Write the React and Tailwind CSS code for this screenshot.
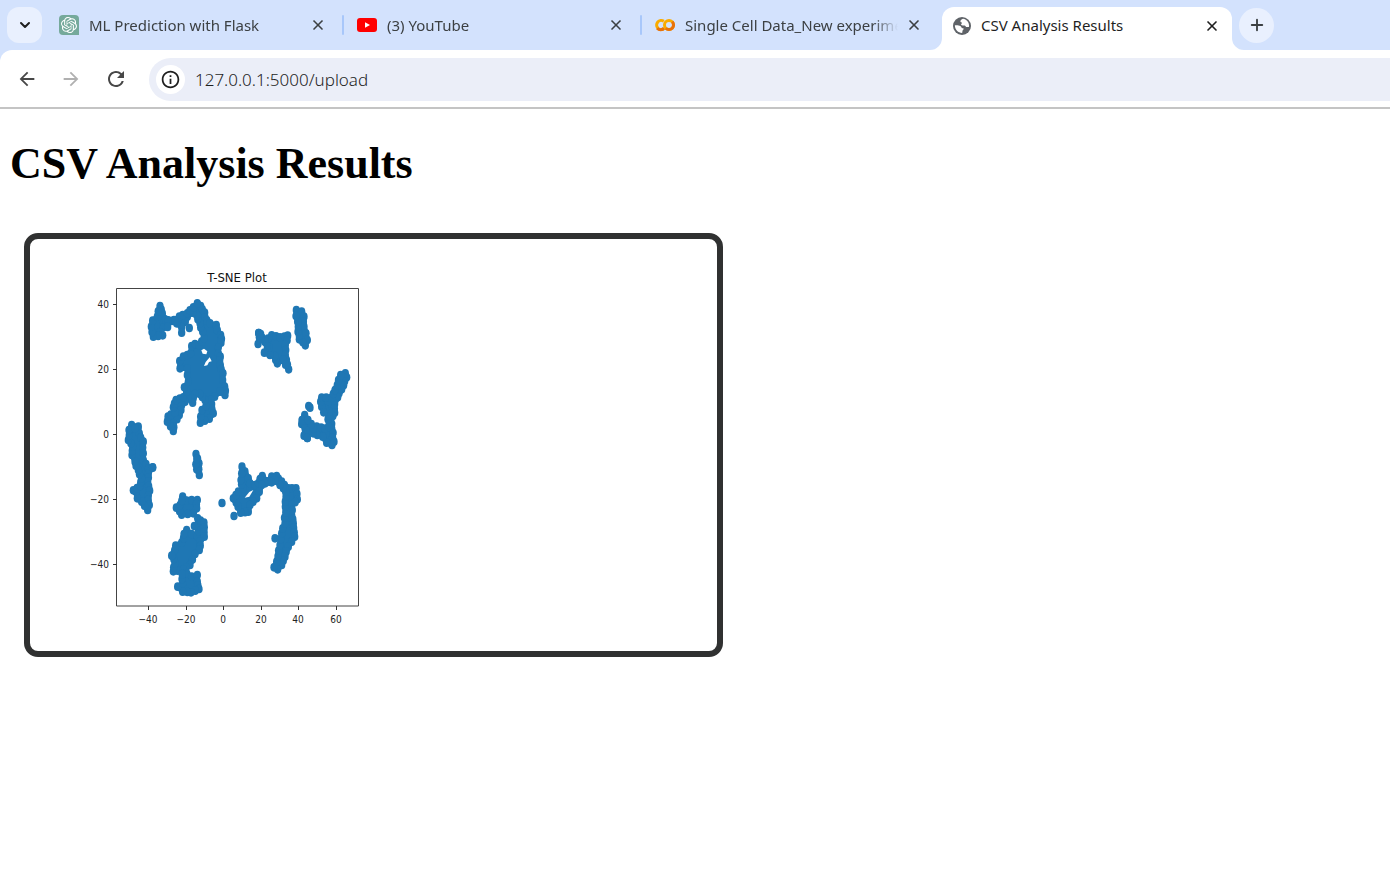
import React from "react";
import { SiOpenai } from "react-icons/si";
import { MdArrowBack, MdArrowForward, MdRefresh, MdInfoOutline } from "react-icons/md";
import { ChevronDown, Plus, X } from "lucide-react";

function ChatIcon() {
  return (
    <span className="flex size-5 shrink-0 items-center justify-center rounded-t rounded-bl bg-[#75a99b] text-white">
      <SiOpenai className="size-4" />
    </span>
  );
}

function YouTubeIcon() {
  return (
    <svg viewBox="0 0 20 20" className="size-5 shrink-0" aria-hidden="true">
      <rect x="0" y="3" width="20" height="14" rx="3" fill="#ff0000" />
      <path d="M8 7.2v5.6l5-2.8z" fill="#fff" />
    </svg>
  );
}

function ColabIcon() {
  return (
    <svg viewBox="0 0 20 20" className="size-5 shrink-0" fill="none" strokeWidth="3" aria-hidden="true">
      <path d="M8.8 6.2A4.6 4.6 0 1 0 8.8 13.8" stroke="#f9ab00" />
      <path d="M2.2 13.2A4.6 4.6 0 0 0 9.2 13" stroke="#e8710a" />
      <circle cx="14" cy="10" r="4.5" stroke="#f9ab00" />
      <path d="M10.8 13.2A4.5 4.5 0 0 0 17.2 6.8" stroke="#e8710a" />
    </svg>
  );
}

function GlobeIcon() {
  return (
    <svg viewBox="0 0 18 18" className="mx-px size-[18px] shrink-0" aria-hidden="true">
      <circle cx="9" cy="9" r="9" fill="#5f6368" />
      <path d="M10 1.800c-1.600.7-2.800 1.700-2.600 2.600.2.800 1.500.6 1.500 1.500 0 .7-.8.8-.8 1.500 0 .9 1.300 1 2.600 1 1.500 0 2.200.7 2.300 1.700h2.900c0-.4.2-.8.2-1.300C16 5 13.500 2.200 10 1.800z" fill="#fff" />
      <path d="M1.900 8.300c2.400-.2 4.300.1 5.400.8 1 .7.8 1.500 1.700 1.900.8.300 1.600.1 1.700.8.100.8-1 1.200-1.200 2-.2.700.1 1.400-.4 2.200C5.300 16 1.700 12.700 1.900 8.300z" fill="#fff" />
    </svg>
  );
}

function Tab({ icon, title, active }) {
  return (
    <div
      className={
        active
          ? "relative ml-1 flex h-[43px] w-[290px] shrink-0 items-center self-end rounded-t-xl bg-white pr-3 pb-[6px] pl-[10px] text-[#1f1f1f]"
          : "flex h-full min-w-0 flex-1 items-center pr-[16px] pl-[13px] text-[#3c4043]"
      }
    >
      {active && (
        <>
          <svg viewBox="0 0 12 12" className="absolute bottom-0 -left-3 size-3" aria-hidden="true">
            <path d="M12 0v12H0A12 12 0 0 0 12 0z" fill="#fff" />
          </svg>
          <svg viewBox="0 0 12 12" className="absolute -right-3 bottom-0 size-3" aria-hidden="true">
            <path d="M0 0v12h12A12 12 0 0 1 0 0z" fill="#fff" />
          </svg>
        </>
      )}
      {icon}
      <a
        href="#"
        className={
          active
            ? "ml-[9px] min-w-0 flex-1 whitespace-nowrap"
            : "ml-[10px] min-w-0 flex-1 whitespace-nowrap [mask-image:linear-gradient(to_right,#000_88%,transparent)]"
        }
      >
        {title}
      </a>
      <button type="button" aria-label={"Close " + title} className="ml-2 flex size-4 items-center justify-center">
        <X className="size-4 shrink-0" strokeWidth={2.5} />
      </button>
    </div>
  );
}

const Divider = () => <span className="h-5 w-[2px] shrink-0 rounded bg-[#a8c7fa]" />;

function BrowserChrome() {
  return (
    <header className="font-['Noto_Sans',sans-serif]">
      <div className="flex h-[50px] items-center bg-[#d3e2fd] pl-[7px] text-[15px]">
        <button type="button" aria-label="Search tabs" className="mr-1 flex h-9 w-[35px] shrink-0 items-center justify-center rounded-xl bg-[#e9f0fe] text-[#1f1f1f]">
          <ChevronDown className="size-4" strokeWidth={3} />
        </button>
        <div className="flex h-full w-[892px] items-center">
          <Tab icon={<ChatIcon />} title="ML Prediction with Flask" />
          <Divider />
          <Tab icon={<YouTubeIcon />} title="(3) YouTube" />
          <Divider />
          <Tab icon={<ColabIcon />} title="Single Cell Data_New experime" />
        </div>
        <Tab active icon={<GlobeIcon />} title="CSV Analysis Results" />
        <button type="button" aria-label="New tab" className="ml-[7px] flex size-[35px] shrink-0 items-center justify-center rounded-full bg-[#e9f0fe] text-[#3c4043]">
          <Plus className="size-[18px]" strokeWidth={2.500} />
        </button>
      </div>
      <div className="bg-[#d3e2fd]">
        <div className="flex h-[59px] items-center rounded-tl-xl border-b-2 border-[#c4c4c4] bg-white pl-4 text-[#474747]">
          <button type="button" aria-label="Back" className="flex size-[22px] items-center justify-center">
            <MdArrowBack className="size-[22px]" />
          </button>
          <button type="button" aria-label="Forward" className="ml-[22px] flex size-[22px] items-center justify-center text-[#b0b0b0]">
            <MdArrowForward className="size-[22px]" />
          </button>
          <button type="button" aria-label="Reload" className="ml-[22px] flex size-6 items-center justify-center">
            <MdRefresh className="size-6" />
          </button>
          <div className="mb-[6px] ml-[21px] flex h-[43px] flex-1 items-center self-end rounded-l-full bg-[#ebeef8] pl-[7px]">
            <span className="flex size-[29px] items-center justify-center rounded-full bg-white text-[#1f1f1f]">
              <MdInfoOutline className="size-[21px]" />
            </span>
            <input aria-label="Address" defaultValue="127.0.0.1:5000/upload" className="ml-[10px] min-w-0 flex-1 bg-transparent text-[17px] font-light text-[#1f1f1f] outline-none" />
          </div>
        </div>
      </div>
    </header>
  );
}

// Cluster outlines and single samples, in thirds of a plot pixel.
const CLUSTERS = [
  "240 138 247 160 255 178 250 202 240 218 248 226 220 230 216 216 214 200 218 182 232 170",
  "352 132 362 138 374 158 375 172 390 190 409 195 412 210 422 225 423 248 415 262 415 280 421 290 421 315 429 340 428 360 434 380 435 405 420 395 404 410 392 420 395 432 400 460 388 476 361 488 362 470 366 450 378 438 375 420 360 402 345 402 338 428 325 415 305 435 298 465 280 490 280 513 262 485 264 470 285 458 280 442 288 420 310 412 320 395 313 382 325 365 322 345 322 325 300 325 299 303 310 290 332 280 335 258 345 252 358 255 372 235 368 215 360 190 350 165 338 158 322 170 316 185 305 202 290 190 282 180 298 170 322 160 340 142",
  "534 252 538 232 536 219 542 222 555 245 575 226 600 232 623 227 616 255 616 285 626 328 610 300 592 310 585 288 570 285 553 278 568 262 555 245 542 236",
  "649 150 665 155 672 170 672 200 678 220 682 240 676 256 658 238 654 215 653 185 648 168",
  "796 340 800 352 785 388 773 412 764 432 764 458 752 478 755 505 762 545 756 555 740 548 728 530 700 520 690 500 710 500 735 506 746 500 744 478 748 455 725 440 722 425 725 413 755 413 765 390 782 345",
  "674 465 666 480 665 492 675 505 672 527 682 534 685 512 700 505 684 480",
  "155 495 175 500 178 520 190 545 190 580 190 600 205 625 218 623 205 640 203 665 209 692 205 706 208 735 203 750 185 725 172 715 168 695 160 691 180 678 185 655 175 630 165 605 156 585 158 560 145 540 147 510",
  "348 582 357 610 358 645 350 628",
  "308 710 320 722 335 720 352 720 350 745 340 760 305 764 289 743 300 735",
  "320 810 335 822 352 828 362 800 353 775 372 788 373 830 360 845 358 870 345 882 330 915 310 930 280 934 285 910 279 885 287 857 305 848 312 822",
  "310 928 320 940 335 950 352 945 352 965 357 987 333 997 308 995 293 980 308 970 306 957",
  "486 620 495 635 505 655 510 670 525 675 535 670 540 657 547 648 560 664 568 664 575 650 590 648 605 665 625 685 648 685 652 718 635 735 635 765 640 790 644 830 635 845 625 860 615 890 605 915 593 928 582 922 590 905 600 855 605 820 615 790 616 740 618 710 617 695 600 675 585 662 575 667 568 665 545 675 538 695 530 715 510 735 505 755 482 758 474 740 460 715 475 695 490 685 483 660 485 640",
].map((list) => {
  const n = list.split(" ").map(Number);
  return n.filter((_, i) => i % 2 === 0).map((x, i) => [x, n[i * 2 + 1]]);
});

const SAMPLES = [
  [257, 180], [275, 183], [265, 181], [286, 183], [305, 218], [328, 204], [536, 219], [539, 226], [562, 260],
  [686, 438], [690, 443], [731, 457], [682, 534], [426, 729], [343, 798], [462, 768], [585, 835],
  [352, 130], [218, 622], [263, 201], [165, 505], [275, 887],
];

// Samples lie along each outline, so that its edge is scalloped.
function edgeSamples(points) {
  return points.flatMap(([x, y], i) => {
    const [u, v] = points[(i + 1) % points.length];
    const steps = Math.max(1, Math.round(Math.hypot(u - x, v - y) / 15));
    return Array.from({ length: steps }, (_, k) => {
      const t = k / steps;
      const drift = k ? Math.sin(i * 7 + k * 3) * 2 : 0;
      return [x + (u - x) * t + drift, y + (v - y) * t];
    });
  });
}

const X_TICKS = [[-40, 68], [-20, 106], [0, 143], [20, 181], [40, 218], [60, 256]];
const Y_TICKS = [[40, 44], [20, 109], [0, 174], [-20, 239], [-40, 304]];

const label = (n) => String(n).replace("-", "\u2212");

function ScatterPlot() {
  return (
    <svg
      viewBox="0 0 290 380"
      className="h-[380px] w-[290px] font-['DejaVu_Sans_Condensed','DejaVu_Sans',sans-serif] text-[10px]"
      role="img"
      aria-label="T-SNE Plot"
    >
      <text x="157" y="22" textAnchor="middle" fill="#111" className="text-[13px]">
        T-SNE Plot
      </text>
      <g transform="scale(.33333)" fill="#1f77b4">
        {CLUSTERS.map((points, i) => (
          <g key={i}>
            <polygon points={points.join(" ")} stroke="#1f77b4" strokeWidth="16" strokeLinejoin="round" />
            {edgeSamples(points).map(([x, y], k) => (
              <ellipse key={k} cx={x} cy={y} rx="11" ry="13" />
            ))}
          </g>
        ))}
        {SAMPLES.map(([x, y], i) => (
          <ellipse key={i} cx={x} cy={y} rx="11" ry="13" />
        ))}
        <g fill="#fff">
          <path d="M364 271l8-5 10 8-3 9-11-2z" />
          <path d="M372 318l5-12 12-14 6 12-8 2-5 10z" />
          <path d="M494 713l14-17 12-6-12 20z" />
        </g>
      </g>
      <path d="M36.5 28.500H278.500V346H36.500Z" fill="none" stroke="#444" />
      {X_TICKS.map(([n, x]) => (
        <g key={n}>
          <path d={`M${x}.5 346v4`} stroke="#333" />
          <text x={x} y="363" textAnchor="middle" fill="#222">{label(n)}</text>
        </g>
      ))}
      {Y_TICKS.map(([n, y]) => (
        <g key={n}>
          <path d={`M33 ${y}.5h4`} stroke="#333" />
          <text x="29" y={y + 4} textAnchor="end" fill="#222">{label(n)}</text>
        </g>
      ))}
    </svg>
  );
}

export default function App() {
  return (
    <div className="min-h-screen bg-white">
      <BrowserChrome />
      <main className="px-[10px] pt-7">
        <h1 className="font-['Liberation_Serif',serif] text-[44px] leading-[54px] font-bold text-black">CSV Analysis Results</h1>
        <section className="mt-[42px] ml-[14px] max-w-[699px] rounded-[14px] border-6 border-[#303131] px-[50px] pt-[21px] pb-[11px]">
          <ScatterPlot />
        </section>
      </main>
    </div>
  );
}
